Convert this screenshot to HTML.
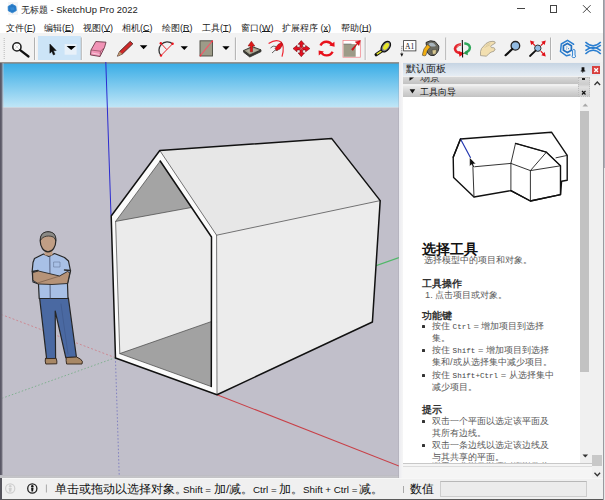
<!DOCTYPE html>
<html><head><meta charset="utf-8">
<style>
*{margin:0;padding:0;box-sizing:border-box}
html,body{width:605px;height:500px;overflow:hidden;background:#f0f0f0;font-family:"Liberation Sans",sans-serif;color:#000}
.a{position:absolute}
.t{position:absolute;white-space:nowrap}
#title{left:0;top:0;width:605px;height:17px;background:#fff}
#menu{left:0;top:17px;width:605px;height:15.5px;background:#fff}
#tb{left:0;top:32.5px;width:605px;height:29.5px;background:#f2f2f2}
u{text-decoration:underline;text-decoration-thickness:0.6px;text-underline-offset:0.4px}
.mi{position:absolute;top:5.6px;font-size:9px;line-height:10px;color:#1a1a1a;white-space:nowrap}
.sep{position:absolute;top:39px;width:1px;height:20px;background:#c4c4c4}
.dd{position:absolute;top:45px;width:0;height:0;border-left:4px solid transparent;border-right:4px solid transparent;border-top:5px solid #000}
#vp{left:0;top:62px}
#panel{left:399px;top:62px;width:206px;height:416px;background:#f0f0f0}
#status{left:0;top:478px;width:605px;height:22px;background:#f0f0f0}
.pc{position:absolute;white-space:nowrap;color:#5a5a5a;font-size:9.3px;line-height:11px}
.mo{font-family:"Liberation Mono",monospace;font-size:7.6px;color:#444}
.ph{position:absolute;white-space:nowrap;color:#333;font-size:10px;font-weight:bold;line-height:11px}
.sl{top:485.3px;font-size:9.8px;line-height:10px;color:#111}
.sc{top:483px;font-size:11.5px;line-height:13px;color:#111}
.bl{position:absolute;width:2.8px;height:2.8px;background:#333;border-radius:0.6px;margin:-0.2px 0 0 -0.2px}
</style></head><body>

<!-- title bar -->
<div id="title" class="a"></div>
<div class="a" style="left:7.5px;top:2px;width:10px;height:12.5px;background:#f3f4f6"></div>
<svg class="a" style="left:6px;top:2px" width="13" height="13"><path d="M6.2,2.2 L9.9,4.3 L10.3,8.6 L6.4,10.8 L2.3,8.8 L2.1,4.4Z" fill="#2679c6" stroke="#2a80cc" stroke-width="0.8" stroke-linejoin="round"/><path d="M4,5.5 L8,5.2 L8.5,8 L5,8.5Z" fill="#3a90d8" opacity="0.7"/></svg>
<div class="t" style="left:21px;top:4.8px;font-size:9.4px;line-height:10px;color:#222">无标题 - SketchUp Pro 2022</div>
<div class="a" style="left:516.5px;top:8.3px;width:8px;height:1px;background:#444"></div>
<div class="a" style="left:549.5px;top:5.2px;width:7.5px;height:7.5px;border:1px solid #444"></div>
<svg class="a" style="left:582px;top:4px" width="10" height="10"><path d="M1 1.2L8.6 8.8M8.6 1.2L1 8.8" stroke="#444" stroke-width="1"/></svg>

<!-- menu -->
<div id="menu" class="a">
  <span class="mi" style="left:6px">文件(<u>F</u>)</span>
  <span class="mi" style="left:44px">编辑(<u>E</u>)</span>
  <span class="mi" style="left:83px">视图(<u>V</u>)</span>
  <span class="mi" style="left:122px">相机(<u>C</u>)</span>
  <span class="mi" style="left:162px">绘图(<u>R</u>)</span>
  <span class="mi" style="left:202px">工具(<u>T</u>)</span>
  <span class="mi" style="left:241px">窗口(<u>W</u>)</span>
  <span class="mi" style="left:282px">扩展程序 (<u>x</u>)</span>
  <span class="mi" style="left:341px">帮助(<u>H</u>)</span>
</div>

<!-- toolbar -->
<div id="tb" class="a"></div>
<div class="a" style="left:38px;top:36px;width:43px;height:24px;background:#cce4f7"></div>
<svg class="a" style="left:0;top:35px" width="605" height="27" viewBox="0 35 605 27">
  <!-- grip -->
  <path d="M4.2,38 V60" stroke="#b8b8b8" stroke-width="1" stroke-dasharray="1 1"/>
  <!-- separators -->
  <path d="M34.6,37.5V60 M81.3,37.5V60 M235.4,37.5V60 M365.2,37.5V60 M445.8,37.5V60 M550.6,37.5V60" stroke="#aaaaaa" stroke-width="1"/>
  <path d="M35.6,37.5V60 M82.3,37.5V60 M236.4,37.5V60 M366.2,37.5V60 M446.8,37.5V60 M551.6,37.5V60" stroke="#fcfcfc" stroke-width="0.8"/>
  <!-- zoom -->
  <circle cx="16.9" cy="46.9" r="4.1" fill="#fff" stroke="#222" stroke-width="1.6"/>
  <path d="M15,45 L18.8,48.8 M18.8,45 L15,48.8" stroke="#ccc" stroke-width="0.8"/>
  <path d="M20.2,50.2 L28.5,56.5" stroke="#111" stroke-width="2.2" stroke-linecap="round"/>
  <!-- select arrow -->
  <path d="M49.9,44 L49.9,53.2 L51.8,51.4 L53.4,55 L55,54.2 L53.4,50.7 L56.2,50.5 Z" fill="#111" stroke="#111" stroke-width="0.5" stroke-linejoin="round"/>
  <rect x="64.6" y="44" width="12" height="10.7" fill="#e8f1f9"/>
  <path d="M66.6,46 H75.8 L71.2,50 Z" fill="#000"/>
  <!-- eraser -->
  <path d="M95.8,41.5 L106,42.2 L104.5,47.5 L100,56.5 L90.4,54.9 L91,50 Z" fill="#f193b6" stroke="#6a3a48" stroke-width="0.9" stroke-linejoin="round"/>
  <path d="M91,50 L100.5,51.2 L104.5,47.5 M100.5,51.2 L100,56.5" fill="none" stroke="#8a4a5c" stroke-width="0.7"/>
  <path d="M92,53 L99.5,54.5" stroke="#f7c6d8" stroke-width="1"/>
  <!-- pencil -->
  <path d="M117.5,56.2 L119.5,51.6 L130.2,41.3 L132.9,43.8 L122.3,54 Z" fill="#cf2a2a" stroke="#3a2020" stroke-width="0.8" stroke-linejoin="round"/>
  <path d="M117.5,56.2 L119.5,51.6 L122.3,54 Z" fill="#b89a70"/>
  <path d="M139.8,45.2 H147.4 L143.6,49.3 Z" fill="#000"/>
  <!-- arc -->
  <path d="M161,55.6 A8.3,8.3 0 0 1 172.6,43.8" fill="none" stroke="#333" stroke-width="1.3"/>
  <path d="M161,55.6 L172.6,43.8 M160.8,43.2 L166.8,49.6" stroke="#e8222a" stroke-width="1"/>
  <circle cx="161" cy="55.6" r="1.2" fill="#f0101a"/><circle cx="172.6" cy="43.8" r="1.2" fill="#f0101a"/><circle cx="160.8" cy="43.2" r="1.2" fill="#f0101a"/>
  <path d="M180.6,46.2 H187.9 L184.3,49.9 Z" fill="#000"/>
  <!-- rectangle -->
  <rect x="200" y="40.8" width="12.5" height="15.2" fill="#9d9b88" stroke="#4a4a40" stroke-width="0.9"/>
  <path d="M200.3,55.7 L212.2,41.2" stroke="#f05a6a" stroke-width="1.1"/>
  <circle cx="200.5" cy="55.5" r="0.9" fill="#f03040"/><circle cx="212.2" cy="41.3" r="0.9" fill="#f03040"/>
  <path d="M222.3,46.2 H229.6 L226,49.9 Z" fill="#000"/>
  <!-- push pull -->
  <path d="M243.6,50.5 L243.6,52.2 L249.8,57 L261,51.6 L261,49.9 L249.8,55 Z" fill="#3e3e38" stroke="#2a2a26" stroke-width="0.8" stroke-linejoin="round"/>
  <path d="M243.6,50.5 L252.3,46.6 L261,49.9 L249.8,55 Z" fill="#9c9a86" stroke="#2e2e28" stroke-width="0.9" stroke-linejoin="round"/>
  <path d="M246.5,50.6 L252.3,48.2 L257.8,50.2 L250,53.5 Z" fill="#b4b2a0"/>
  <path d="M250.3,51.8 L250.3,46 L248,46 L251.4,41.2 L254.8,46 L252.5,46 L252.5,51.8 Z" fill="#e01818" stroke="#8a1010" stroke-width="0.5"/>
  <!-- follow me -->
  <path d="M268.6,43.5 Q276,38.5 281,42 Q285,46 282,56.6" fill="none" stroke="#ee2430" stroke-width="1.2"/>
  <path d="M270.5,48 Q273,45 276,46.5 M272,53 Q275,49 278,50" fill="none" stroke="#555" stroke-width="0.9"/>
  <path d="M275,48.5 L278,44.5 L281.5,42.5 L282.5,45 L280,49 L276.5,50.5 Z" fill="#e8101a" stroke="#700" stroke-width="0.5"/>
  <!-- move -->
  <path d="M301.3,40.6 L304.5,44.3 L302.6,44.3 L302.6,47.3 L305.6,47.3 L305.6,45.4 L309.9,48.6 L305.6,51.8 L305.6,49.9 L302.6,49.9 L302.6,52.9 L304.5,52.9 L301.3,56.7 L298.1,52.9 L300,52.9 L300,49.9 L297,49.9 L297,51.8 L293,48.6 L297,45.4 L297,47.3 L300,47.3 L300,44.3 L298.1,44.3 Z" fill="#e4101e" stroke="#7a0a10" stroke-width="0.6" stroke-linejoin="round"/>
  <path d="M299,46.5 L303.6,50.7 M303.6,46.5 L299,50.7" stroke="#9a9a9a" stroke-width="0.6"/>
  <!-- rotate -->
  <path d="M320.5,45.5 A6.6,6.6 0 0 1 332.2,45.2" fill="none" stroke="#e8101a" stroke-width="2.4"/>
  <path d="M332.6,51.7 A6.6,6.6 0 0 1 320.9,52" fill="none" stroke="#e8101a" stroke-width="2.4"/>
  <path d="M329.3,45.6 L334.6,46.8 L334.4,41.8 Z M323.9,51.6 L318.6,50.4 L318.8,55.4 Z" fill="#e8101a"/>
  <!-- scale -->
  <rect x="343" y="40.5" width="17.3" height="16.7" fill="#fff" stroke="#f07880" stroke-width="0.7"/>
  <rect x="343.5" y="44.1" width="12.2" height="12.7" fill="#9d9b88"/>
  <path d="M343.5,44.1 H351.5" stroke="#555" stroke-width="0.6"/>
  <path d="M351.5,49.2 L357,43.6 L355.2,41.9 L360.3,40.6 L359,45.6 L357.3,44 L352.8,50.5 Z" fill="#e8101a" stroke="#900" stroke-width="0.4"/>
  <!-- tape -->
  <path d="M382.8,50.2 L376.2,54.6" stroke="#111" stroke-width="3.4" stroke-linecap="round"/>
  <path d="M382.2,50.6 L376.8,54.2" stroke="#e6e62a" stroke-width="1.5"/>
  <ellipse cx="385.8" cy="46.6" rx="3.8" ry="6" transform="rotate(38 385.8 46.6)" fill="#7a7a8a" stroke="#111" stroke-width="1.2"/>
  <ellipse cx="386" cy="46.4" rx="2.2" ry="4" transform="rotate(38 386 46.4)" fill="#e6e62a"/>
  <!-- text -->
  <rect x="403.6" y="40.6" width="12.3" height="10.3" fill="#fff" stroke="#333" stroke-width="0.8"/>
  <text x="405" y="48.9" font-family="Liberation Serif" font-size="7.6" fill="#222">A1</text>
  <path d="M403.6,46.3 H401.8 V54" stroke="#444" stroke-width="0.7" stroke-dasharray="1 0.8" fill="none"/>
  <path d="M400.2,53.6 H403.4 L401.8,56.8 Z" fill="#111"/>
  <!-- paint bucket -->
  <path d="M426,42.5 Q430,39.5 435,41.5 L438.8,46 Q439.5,52 434,55.5 Q430,56.5 427.5,53 Z" fill="#6a6a60" stroke="#222" stroke-width="0.9"/>
  <path d="M428.5,44 Q431,42 434,43.5 L436,46 Q433,47 430,46 Z" fill="#a8b4bc"/>
  <path d="M432,50 L436.5,49.5 L436,54 L432.5,54.5 Z" fill="#d8c890" stroke="#333" stroke-width="0.5"/>
  <path d="M427.5,44.5 Q423,48 422.3,55.2 Q424.5,56.5 426,55.2 Q426.5,50 430.5,47 Z" fill="#f2ae10" stroke="#444" stroke-width="0.6"/>
  <!-- orbit -->
  <path d="M461,44.3 Q455.6,45 455,48.8 Q455.5,52.5 460.5,53.2" fill="none" stroke="#e4242c" stroke-width="2.6"/>
  <path d="M461,44.3 Q457.5,45.5 457,47.5" fill="none" stroke="#e87070" stroke-width="1.2"/>
  <path d="M458.5,51 L464.5,53.3 L459.5,56.8 Z" fill="#e4101a"/>
  <path d="M464.3,43.2 Q469.6,44 469.9,47.5 Q469.6,51.5 465.5,52.6" fill="none" stroke="#2fa85a" stroke-width="2.5"/>
  <path d="M467.5,50 L463.2,53.2 L467.8,55.3 Z" fill="#2a9a50"/>
  <path d="M462.3,40 L462.6,57.4" stroke="#111" stroke-width="1.1"/>
  <!-- pan -->
  <path d="M480.5,55.6 Q480,51 481.5,48.5 L486,43.5 Q489.5,41 493,41.3 Q495.8,41.5 495.2,43.2 L491.2,45.6 Q490.2,47 491.5,47.6 Q494.5,47.2 495.2,49 Q494.8,51.8 491,52.2 Q488.5,53.6 486.5,56.2 Z" fill="#f2dfb0" stroke="#a09888" stroke-width="0.8" stroke-linejoin="round"/>
  <path d="M486,45.5 L490.5,43 M484.5,47.5 L490,44.8" stroke="#c8b890" stroke-width="0.5"/>
  <!-- zoom -->
  <circle cx="515.4" cy="45.8" r="4.3" fill="#92bbe2" stroke="#222" stroke-width="1.3"/>
  <path d="M512.3,49 L505.6,55.2" stroke="#111" stroke-width="2.2" stroke-linecap="round"/>
  <!-- zoom extents -->
  <circle cx="537.8" cy="48.2" r="3.2" fill="#92bbe2" stroke="#333" stroke-width="1"/>
  <path d="M535.6,50.6 L530,56" stroke="#111" stroke-width="1.8" stroke-linecap="round"/>
  <path d="M530,40.6 L534.5,41.8 L531.2,45.1 Z M545.8,40.6 L544.6,45.1 L541.3,41.8 Z M545.8,56.4 L541.3,55.2 L544.6,51.9 Z" fill="#e01018"/>
  <path d="M531.5,42.2 L535,45.6 M544.3,42.2 L540.8,45.6 M544.3,54.8 L540.8,51.2" stroke="#e01018" stroke-width="1.2"/>
  <!-- hex icon -->
  <path d="M573.5,45 L573.5,44.2 L567.5,40.3 L561.3,44 L560.5,51.5 L566.5,55.8 L570.5,54.8" fill="none" stroke="#2a7ed0" stroke-width="1.5" stroke-linejoin="round"/>
  <path d="M567.4,43.4 L571.4,45.7 L571.4,50.3 L567.4,52.6 L563.4,50.3 L563.4,45.7 Z" fill="none" stroke="#2270c0" stroke-width="1.7" stroke-linejoin="round"/>
  <path d="M566.3,47 h1 M568,48.6 h1 M566,49 h0.8" stroke="#2a7ed0" stroke-width="0.9"/>
  <path d="M572.6,55 L572.6,50.2 Q573.8,48.6 575,50.2 L575,55 Q576.5,57.5 573.8,57.6 Q571,57.5 572.6,55 Z" fill="#f4f8fc" stroke="#2a7ed0" stroke-width="1"/>
  <!-- wave icon -->
  <path d="M585.4,42 Q593.1,49.5 600.8,42 M585.4,45.2 Q593.1,51.5 600.8,45.2 M585.4,50.6 Q593.1,44.5 600.8,50.6 M585.4,54 Q593.1,46.5 600.8,54" fill="none" stroke="#2a7ed0" stroke-width="1.6"/>
</svg>
<div class="a" style="left:0;top:62px;width:399px;height:1.6px;background:linear-gradient(#a09c98,#7c7874)"></div>

<!-- viewport -->
<svg id="vp" class="a" width="399" height="416" viewBox="0 62 399 416">
  <defs>
    <linearGradient id="sky" x1="0" y1="0" x2="0" y2="1">
      <stop offset="0" stop-color="#3aade6"/><stop offset="1" stop-color="#c0e6f7"/>
    </linearGradient>
  </defs>
  <rect x="0" y="63.6" width="399" height="43.9" fill="url(#sky)"/>
  <rect x="0" y="107.5" width="399" height="371" fill="#c1bfca"/>
  <!-- axes -->
  <line x1="105.8" y1="62" x2="111" y2="215.5" stroke="#2b2bd0" stroke-width="1"/>
  <line x1="115.4" y1="357.7" x2="119.3" y2="478" stroke="#7f7fc0" stroke-width="1" stroke-dasharray="1.5 2"/>
  <line x1="115.4" y1="357.7" x2="0" y2="314" stroke="#cc8a94" stroke-width="1" stroke-dasharray="2 2"/>
  <line x1="217" y1="394.7" x2="399" y2="466" stroke="#c84048" stroke-width="1.1"/>
  <line x1="115.4" y1="357.7" x2="0" y2="399" stroke="#80b090" stroke-width="1" stroke-dasharray="1.5 2"/>
  <line x1="115.4" y1="357.7" x2="399" y2="257.5" stroke="#50b868" stroke-width="1.2"/>
  <!-- house -->
  <g stroke-linejoin="round" stroke-linecap="round">
    <polygon points="159.8,150.5 331.8,138.6 380.2,200.6 216.6,235.2" fill="#e7e7e7"/>
    <polygon points="216.6,235.2 380.2,200.6 372.4,322 217,394.7" fill="#ececec"/>
    <polygon points="159.8,150.5 111.2,216 115.5,358 217,394.7 216.6,235.2" fill="#fbfbfb"/>
    <polygon points="160.2,161 115.6,221.4 119.8,353.6 211.3,386.6 211.5,237" fill="#ebebeb"/>
    <polygon points="160.2,161 115.6,221.4 191.4,207.5" fill="#a4a4a4"/>
    <polygon points="119.8,353.6 211,321.7 211,386.6" fill="#a2a2a2"/>
    <!-- thin lines -->
    <path d="M216.6,235.2 L380.2,200.6 M159.8,150.5 L216.6,235.2 L217,394.7 M115.6,221.4 L191.4,207.5 M119.8,353.6 L211,321.7 M160.2,161 L115.6,221.4 L119.8,353.6 L211.3,386.6" fill="none" stroke="#444" stroke-width="0.7"/>
    <!-- thick lines -->
    <path d="M159.8,150.5 L331.8,138.6 L380.2,200.6 L372.4,322 L217,394.7 L115.5,358 L111.2,216 Z" fill="none" stroke="#111" stroke-width="1.5"/>
    <path d="M160.2,161 L211.5,237 L211.3,386.6" fill="none" stroke="#111" stroke-width="1.5"/>
  </g>
  <!-- person -->
  <g stroke="#262626" stroke-linejoin="round" stroke-linecap="round">
    <path d="M39.6,298 L68.4,298 L76.4,357 L65.8,357.6 L55.2,311 L55.6,358.6 L46.6,358.6 Z" fill="#4a69a2" stroke-width="1.2"/>
    <path d="M61,304 L68,354" stroke="#3a5282" stroke-width="0.5" fill="none"/>
    <path d="M45.4,358.6 L56.2,358.4 Q57.2,361 56.8,363.8 L45.8,364 Q44.8,361 45.4,358.6 Z" fill="#a88866" stroke="#3a2c22" stroke-width="1"/>
    <path d="M66.2,357.6 L76.6,357 Q81.5,359 82.4,361.5 L82,364 L66.6,364 Q65.8,360.5 66.2,357.6 Z" fill="#a88866" stroke="#3a2c22" stroke-width="1"/>
    <path d="M34.5,258.5 L43.5,254 L49,256.5 L54.5,253.5 L64.5,257.5 L68.5,261 L70.5,271 L67.5,284 L68,298.5 L39.2,298.5 L38.5,284 L33,282 L32.2,271 L33,262.5 Z" fill="#a8c0e6" stroke-width="1.2"/>
    <path d="M49.8,256.5 L50.2,298" stroke="#4a5470" stroke-width="0.9" fill="none"/>
    <path d="M54,262 L60,262 L60,267 L54,267 Z" fill="none" stroke="#5a6a8a" stroke-width="0.5"/>
    <path d="M32.4,271.5 L38,270.5 M64.5,270 L70.5,270.5" stroke="#2a2a2a" stroke-width="1.4"/>
    <path d="M33,272.5 L38.5,271 L59.5,276 L67.5,271.5 L69.8,272.8 L67.5,283.5 L52,284.5 L38.5,284 L33.2,280.5 Z" fill="#b69378" stroke-width="0.9"/>
    <path d="M37.5,283 L60.5,275.8" stroke="#6a5040" stroke-width="0.6" fill="none"/>
    <path d="M44.6,248 L52.4,248 L52.4,255.5 L44.6,255.5Z" fill="#bf9d84" stroke="none"/>
    <path d="M40.2,241 C40,235 43.5,231.8 48,231.8 C53,231.8 56,235 55.8,241 C55.8,247 52.5,251.8 48,251.8 C43.5,251.8 40.4,247 40.2,241Z" fill="#c09e85" stroke-width="1.2"/>
    <path d="M40.4,240 C40,234 44,231.8 48,231.8 C53,231.8 56.2,234.5 55.8,240.5 L54.5,238 C52,235.5 45,235 41.8,238.5 Z" fill="#8b8a86" stroke-width="0.8"/>
  </g>
  
</svg>

<div class="a" style="left:0;top:63px;width:4px;height:415px;background:linear-gradient(90deg,#5a5866 0,#5a5866 1.2px,rgba(198,196,204,0.6) 3.2px,rgba(198,196,204,0) 4px)"></div>
<div class="a" style="left:0;top:474.5px;width:399px;height:3.5px;background:linear-gradient(#b6b5bd,#c9c8ce 40%,#b8b8bc 75%,#d8d8da)"></div>
<!-- panel -->
<div id="panel" class="a"></div>
<div class="a" style="left:399px;top:62px;width:4px;height:416px;background:linear-gradient(90deg,#ebebf0,#f6f6f6)"></div>
<div class="a" style="left:397.6px;top:63px;width:1.4px;height:415px;background:rgba(150,148,160,0.25)"></div>
<div class="a" style="left:403px;top:62.5px;width:197px;height:13.5px;background:linear-gradient(#c6d4e2,#dae4ee 60%,#e6edf4)"></div>
<div class="t" style="left:406px;top:64px;font-size:9.6px;line-height:10px;color:#1a1a1a">默认面板</div>
<div class="a" style="left:592px;top:66px;width:8.3px;height:8.3px;background:#d8403e"></div>
<svg class="a" style="left:592px;top:66px" width="9" height="9"><path d="M2.3,2.3L6,6M6,2.3L2.3,6" stroke="#fff" stroke-width="1.4"/></svg>
<svg class="a" style="left:580px;top:66px" width="6" height="8"><path d="M1.6,1.2H4.4V4.6H5.2V5.4H3.4L3,7H2.6L2.4,5.4H0.8V4.6H1.6Z" fill="#111"/></svg>
<div class="a" style="left:403px;top:76.5px;width:175px;height:7.2px;background:linear-gradient(#d8d8d8,#c2c2c2);overflow:hidden">
  <div class="t" style="left:17px;top:-4px;font-size:9.5px;line-height:10px;color:#333">场景</div>
</div>
<svg class="a" style="left:408px;top:76px" width="8" height="6"><path d="M1.5,1.5 L6,1.5 L1.5,4.8Z" fill="#111"/></svg>
<div class="a" style="left:403px;top:86.3px;width:175px;height:10.7px;background:linear-gradient(#eaeaea,#d4d4d4 50%,#c2c2c2)"></div>
<div class="a" style="left:578px;top:76.5px;width:12.3px;height:20.5px;background:linear-gradient(#dadada,#cdcdcd 35%,#e0e0e0 50%,#c8c8c8);border:1px dotted #bdbdbd"></div>
<div class="a" style="left:582.3px;top:77.5px;width:3px;height:2.5px;background:#222"></div>
<svg class="a" style="left:580px;top:89px" width="8" height="8"><path d="M2,2L5.5,5.5M5.5,2L2,5.5" stroke="#111" stroke-width="1.2"/></svg>
<svg class="a" style="left:408px;top:88px" width="9" height="7"><path d="M1.6,1.2 H7.2 L4.4,5.5Z" fill="#111"/></svg>
<div class="t" style="left:419.5px;top:87px;font-size:9.2px;line-height:10px;color:#111">工具向导</div>
<div class="a" style="left:403px;top:97px;width:176.5px;height:366px;background:#fff"></div>
<div class="a" style="left:579.5px;top:97px;width:12px;height:367px;background:#f0f0f0"></div>
<div class="a" style="left:580.4px;top:110.6px;width:9px;height:261.5px;background:#c2c2c2"></div>
<svg class="a" style="left:581px;top:102px" width="9" height="6"><path d="M1.5,4.5 L4.3,1.5 L7.1,4.5Z" fill="#a8a8a8"/></svg>
<svg class="a" style="left:581px;top:453px" width="9" height="6"><path d="M1.5,1.5 L4.3,4.5 L7.1,1.5Z" fill="#333"/></svg>
<div class="a" style="left:403px;top:464px;width:188.8px;height:14px;background:#f5f5f5"></div>
<div class="a" style="left:403px;top:463px;width:188.8px;height:1px;background:#c8c8c8"></div>
<div class="a" style="left:403px;top:465.5px;width:188.8px;height:1px;background:#dcdcdc"></div>
<div class="a" style="left:591.8px;top:62px;width:11px;height:416px;background:#f0f0f0"></div>
<div class="a" style="left:592px;top:62.5px;width:8.3px;height:13.5px;background:linear-gradient(#c6d4e2,#dae4ee 60%,#e6edf4)"></div>
<div class="a" style="left:592px;top:66px;width:8.3px;height:8.3px;background:#d8403e"></div>
<svg class="a" style="left:592px;top:66px" width="9" height="9"><path d="M2.3,2.3L6,6M6,2.3L2.3,6" stroke="#fff" stroke-width="1.4"/></svg>
<div class="a" style="left:592.2px;top:455px;width:9.8px;height:11.4px;background:#c8c8c8"></div>
<svg class="a" style="left:593px;top:80px" width="9" height="7"><path d="M1.5,5 L4.3,2 L7.1,5" fill="none" stroke="#333" stroke-width="1.3"/></svg>
<svg class="a" style="left:593px;top:471px" width="9" height="7"><path d="M1.5,1.8 L4.3,4.8 L7.1,1.8" fill="none" stroke="#333" stroke-width="1.3"/></svg>
<!-- panel drawing -->
<svg class="a" style="left:403px;top:97px" width="176" height="140" viewBox="403 97 176 140">
  <g fill="#fff" stroke-linejoin="round" stroke-linecap="round">
    <path d="M460.5,139 L551.5,132.2 L567.2,155.4 L567.2,180.2 L561.6,181.3 L560.5,194.6 L530.4,201 L510.9,190.6 L474,197 L453.6,177.6 L453.2,157.2 Z" fill="#fff" stroke="#111" stroke-width="1.4"/>
    <path d="M472.9,166.9 L510.9,163.4 M472.9,166.9 L474,197 M510.9,163.4 L510.9,190.6 M510.9,163.4 L515.5,143.4 L546.4,152.2 L560.5,165.8 L560.5,194.6 M510.9,163.4 L530.4,170.6 L546.4,152.2 M530.4,170.6 L560.5,165.8 M530.4,170.6 L530.4,201 M556,157.8 L567.2,155.4" fill="none" stroke="#2a2a2a" stroke-width="0.95"/>
    <path d="M515.5,143.4 L546.4,152.2 L560.5,165.8 L560.5,194.6 L530.4,201 L510.9,190.6" fill="none" stroke="#111" stroke-width="1.4"/>
    <path d="M460.5,139 L470.4,157.5" fill="none" stroke="#2438b0" stroke-width="1.2"/>
    <path d="M460.5,139 L453.2,157.2" fill="none" stroke="#111" stroke-width="1.4"/>
  </g>
  <path d="M469.6,157.5 L469.6,166.3 L471.6,164.6 L473,167.8 L474.6,167.1 L473.2,164 L475.8,163.8 Z" fill="#111" stroke="#fff" stroke-width="0.5"/>
</svg>
<div class="t" style="left:422px;top:242px;font-size:14px;font-weight:bold;line-height:15px;color:#111">选择工具</div>
<div class="pc" style="left:424px;top:255px">选择模型中的项目和对象。</div>
<div class="ph" style="left:422px;top:278px">工具操作</div>
<div class="pc" style="left:425px;top:290px">1. 点击项目或对象。</div>
<div class="ph" style="left:422px;top:310px">功能键</div>
<div class="pc" style="left:432px;top:321px">按住 <span class="mo">Ctrl</span> = 增加项目到选择</div>
<div class="pc" style="left:432px;top:333px">集。</div>
<div class="pc" style="left:432px;top:345px">按住 <span class="mo">Shift</span> = 增加项目到选择</div>
<div class="pc" style="left:432px;top:357px">集和/或从选择集中减少项目。</div>
<div class="pc" style="left:432px;top:370px">按住 <span class="mo">Shift+Ctrl</span> = 从选择集中</div>
<div class="pc" style="left:432px;top:382px">减少项目。</div>
<div class="ph" style="left:422px;top:404px">提示</div>
<div class="pc" style="left:432px;top:416px">双击一个平面以选定该平面及</div>
<div class="pc" style="left:432px;top:428px">其所有边线。</div>
<div class="pc" style="left:432px;top:440px">双击一条边线以选定该边线及</div>
<div class="pc" style="left:432px;top:452px">与其共享的平面。</div>
<div class="a" style="left:403px;top:461.8px;width:176px;height:1.4px;overflow:hidden"><div class="pc" style="left:29px;top:-1.6px;color:#888">双击一个组件以选定该组件及</div></div>
<div class="bl" style="left:422px;top:325px"></div>
<div class="bl" style="left:422px;top:349px"></div>
<div class="bl" style="left:422px;top:374px"></div>
<div class="bl" style="left:422px;top:420px"></div>
<div class="bl" style="left:422px;top:444px"></div>

<!-- status -->
<div id="status" class="a"></div>
<div class="a" style="left:0;top:478px;width:605px;height:1px;background:#f7f7f7"></div>
<div class="a" style="left:0;top:498.5px;width:605px;height:1.5px;background:#5a5a5a"></div>
<div class="a" style="left:0;top:478px;width:1.5px;height:22px;background:#55545c"></div>
<svg class="a" style="left:0;top:478px" width="60" height="22" viewBox="0 478 60 22">
  <circle cx="10.2" cy="488.5" r="4.6" fill="none" stroke="#cfcfcf" stroke-width="1.2"/>
  <circle cx="10.2" cy="486.3" r="1.3" fill="#cfcfcf"/><path d="M8.6,488 H11.8 L11.2,491.8 H9.2Z" fill="#cfcfcf"/>
  <circle cx="32.3" cy="488.5" r="4.6" fill="none" stroke="#222" stroke-width="1.3"/>
  <circle cx="32.3" cy="486.2" r="1.2" fill="#111"/><path d="M31.1,487.8 H33.5 L33.1,491.6 H31.5Z" fill="#111"/>
  <path d="M46.4,484.5 V492.5" stroke="#a8a8a8" stroke-width="1"/>
</svg>
<div class="t" style="left:54.5px;top:483px;font-size:11.5px;line-height:13px;color:#111">单击或拖动以选择对象。</div>
<div class="t sl" style="left:183px">Shift =</div>
<div class="t sc" style="left:214px">加/减。</div>
<div class="t sl" style="left:253px">Ctrl =</div>
<div class="t sc" style="left:279px">加。</div>
<div class="t sl" style="left:303px">Shift + Ctrl =</div>
<div class="t sc" style="left:358.8px">减。</div>
<div class="a" style="left:402.5px;top:485.5px;width:1px;height:7px;background:#a8a8a8"></div>
<div class="t" style="left:410px;top:482.5px;font-size:12px;line-height:13px;color:#111">数值</div>
<div class="a" style="left:440px;top:481px;width:146.5px;height:16px;background:#ececec;border:1px solid #cdcdcd;border-top-color:#b8b8b8"></div>

<div class="a" style="left:602.5px;top:0;width:1px;height:500px;background:#9a9aa0"></div>
<div class="a" style="left:603.5px;top:0;width:1.5px;height:168px;background:#b0aeb8"></div>
<div class="a" style="left:603.5px;top:168px;width:1.5px;height:332px;background:#e8e8e8"></div>
</body></html>
